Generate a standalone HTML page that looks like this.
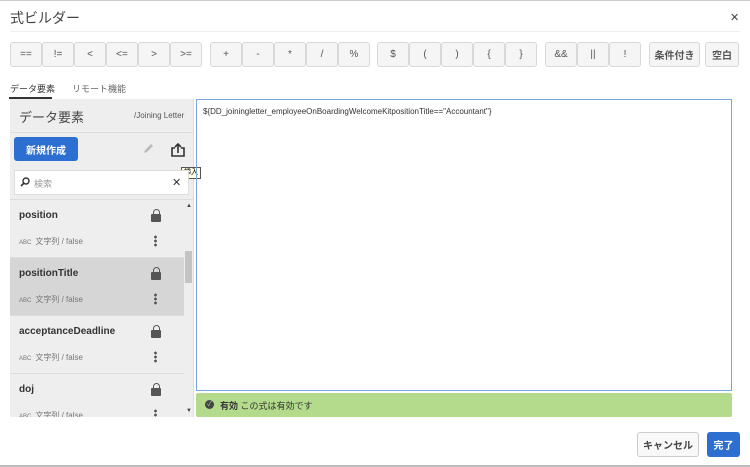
<!DOCTYPE html>
<html><head><meta charset="utf-8"><style>
*{box-sizing:border-box;margin:0;padding:0}
body{width:750px;height:467px;background:#fff;font-family:"Liberation Sans","Noto Sans CJK JP",sans-serif;position:relative;overflow:hidden;color:#333}
.a{position:absolute}
.b{position:absolute;top:42px;height:25px;border:1px solid #d8d8d8;border-radius:3px;background:#f5f5f5;font-size:10px;color:#555;display:flex;align-items:center;justify-content:center}
.row{position:absolute;left:10px;width:174px;height:58px;border-bottom:1px solid #ddd}
.nm{position:absolute;left:9px;top:10px;font-size:10px;font-weight:bold;color:#333}
.ty{position:absolute;left:9px;top:36px;font-size:8px;color:#777}
.ty small{font-size:6px;margin-right:4px}
.lk{position:absolute;left:141px;top:14px;width:10px;height:8px;background:#555;border-radius:1px}
.lk:before{content:"";position:absolute;left:1.5px;top:-5px;width:7px;height:6px;border:1.6px solid #555;border-bottom:none;border-radius:4px 4px 0 0;box-sizing:border-box}
.dt{position:absolute;left:144px;top:35px;width:3px;height:12px;background:radial-gradient(circle,#555 1.3px,transparent 1.5px) 0 0/3px 4px}
</style></head><body>
<div class="a" style="left:0;top:0;width:750px;height:1px;background:#ccc"></div>
<div class="a" style="left:10px;top:8px;font-size:14px;color:#444">式ビルダー</div>
<div class="a" style="left:730px;top:11px;font-size:11px;color:#444">✕</div>
<div class="a" style="left:10px;top:31px;width:730px;height:1px;background:#eee"></div>

<div class="b" style="left:10px;width:32px">==</div>
<div class="b" style="left:42px;width:32px">!=</div>
<div class="b" style="left:74px;width:32px">&lt;</div>
<div class="b" style="left:106px;width:32px">&lt;=</div>
<div class="b" style="left:138px;width:32px">&gt;</div>
<div class="b" style="left:170px;width:32px">&gt;=</div>
<div class="b" style="left:210px;width:32px">+</div>
<div class="b" style="left:242px;width:32px">-</div>
<div class="b" style="left:274px;width:32px">*</div>
<div class="b" style="left:306px;width:32px">/</div>
<div class="b" style="left:338px;width:32px">%</div>
<div class="b" style="left:377px;width:32px">$</div>
<div class="b" style="left:409px;width:32px">(</div>
<div class="b" style="left:441px;width:32px">)</div>
<div class="b" style="left:473px;width:32px">{</div>
<div class="b" style="left:505px;width:32px">}</div>
<div class="b" style="left:545px;width:32px">&amp;&amp;</div>
<div class="b" style="left:577px;width:32px">||</div>
<div class="b" style="left:609px;width:32px">!</div>
<div class="b" style="left:649px;width:51px;font-size:10px;font-weight:bold">条件付き</div>
<div class="b" style="left:705px;width:34px;font-size:10px;font-weight:bold">空白</div>

<div class="a" style="left:10px;top:82px;font-size:9px;color:#333">データ要素</div>
<div class="a" style="left:72px;top:82px;font-size:9px;color:#666">リモート機能</div>
<div class="a" style="left:9px;top:97px;width:43px;height:2px;background:#333"></div>

<div class="a" style="left:10px;top:99px;width:184px;height:318px;background:#eee;border-right:1px solid #ddd"></div>
<div class="a" style="left:19px;top:107px;font-size:13px;color:#444">データ要素</div>
<div class="a" style="left:134px;top:111px;font-size:8px;color:#555">/Joining Letter</div>
<div class="a" style="left:10px;top:132px;width:184px;height:1px;background:#ddd"></div>
<div class="a" style="left:14px;top:137px;width:64px;height:24px;background:#2d6fd0;border-radius:3px;color:#fff;font-size:10px;font-weight:bold;display:flex;align-items:center;justify-content:center">新規作成</div>
<svg class="a" style="left:142px;top:143px" width="12" height="12" viewBox="0 0 12 12"><path d="M2 10l1-3 6-6 2 2-6 6z" fill="#bbb"/></svg>
<svg class="a" style="left:170px;top:142px" width="16" height="16" viewBox="0 0 16 16"><path d="M5 6H2v8h12V6h-3" fill="none" stroke="#333" stroke-width="1.6"/><path d="M8 11V2M5 5l3-3 3 3" fill="none" stroke="#333" stroke-width="1.6"/></svg>
<div class="a" style="left:181px;top:167px;width:20px;height:12px;background:#ffffe0;border:1px solid #555;font-size:7px;line-height:10px;text-align:center;color:#000;white-space:nowrap;overflow:hidden">挿入</div>
<div class="a" style="left:14px;top:170px;width:175px;height:25px;background:#fff;border:1px solid #ddd"></div>
<svg class="a" style="left:20px;top:177px" width="10" height="10" viewBox="0 0 10 10"><circle cx="6" cy="4" r="3" fill="none" stroke="#333" stroke-width="1.4"/><path d="M4 6L1 9" stroke="#333" stroke-width="1.6"/></svg>
<div class="a" style="left:34px;top:177px;font-size:9px;color:#999">検索</div>
<div class="a" style="left:172px;top:176px;font-size:11px;color:#333">✕</div>
<div class="a" style="left:10px;top:199px;width:184px;height:1px;background:#ddd"></div>

<div class="row" style="top:200px"><div class="nm">position</div><div class="ty"><small>ABC</small>文字列 / false</div><div class="lk"></div><div class="dt"></div></div>
<div class="row" style="top:258px;background:#d6d6d6"><div class="nm">positionTitle</div><div class="ty"><small>ABC</small>文字列 / false</div><div class="lk"></div><div class="dt"></div></div>
<div class="row" style="top:316px"><div class="nm">acceptanceDeadline</div><div class="ty"><small>ABC</small>文字列 / false</div><div class="lk"></div><div class="dt"></div></div>
<div class="row" style="top:374px;height:43px;border:none;overflow:hidden"><div class="nm">doj</div><div class="ty"><small>ABC</small>文字列 / false</div><div class="lk"></div><div class="dt"></div></div>
<div class="a" style="left:185px;top:251px;width:7px;height:32px;background:#c4c4c4"></div>
<div class="a" style="left:186px;top:203px;font-size:6px;color:#444">▲</div>
<div class="a" style="left:186px;top:408px;font-size:6px;color:#444">▼</div>

<div class="a" style="left:196px;top:99px;width:536px;height:292px;border:1px solid #7aa7e0"></div>
<div class="a" style="left:203px;top:107px;font-size:8px;color:#333">${DD_joiningletter_employeeOnBoardingWelcomeKitpositionTitle=="Accountant"}</div>
<div class="a" style="left:196px;top:393px;width:536px;height:24px;background:#b4da8b;border-radius:2px"></div>
<div class="a" style="left:205px;top:400px;width:9px;height:9px;background:#444;border-radius:50%;color:#b4da8b;font-size:7px;line-height:9px;text-align:center">✓</div>
<div class="a" style="left:220px;top:399px;font-size:9px;color:#333"><b>有効</b> この式は有効です</div>

<div class="a" style="left:637px;top:432px;width:62px;height:25px;border:1px solid #ccc;border-radius:3px;background:#f8f8f8;font-size:10px;font-weight:bold;color:#444;display:flex;align-items:center;justify-content:center">キャンセル</div>
<div class="a" style="left:707px;top:432px;width:33px;height:25px;border-radius:3px;background:#2d6fd0;font-size:10px;font-weight:bold;color:#fff;display:flex;align-items:center;justify-content:center">完了</div>
<div class="a" style="left:0;top:465px;width:750px;height:2px;background:#bbb"></div>
</body></html>
